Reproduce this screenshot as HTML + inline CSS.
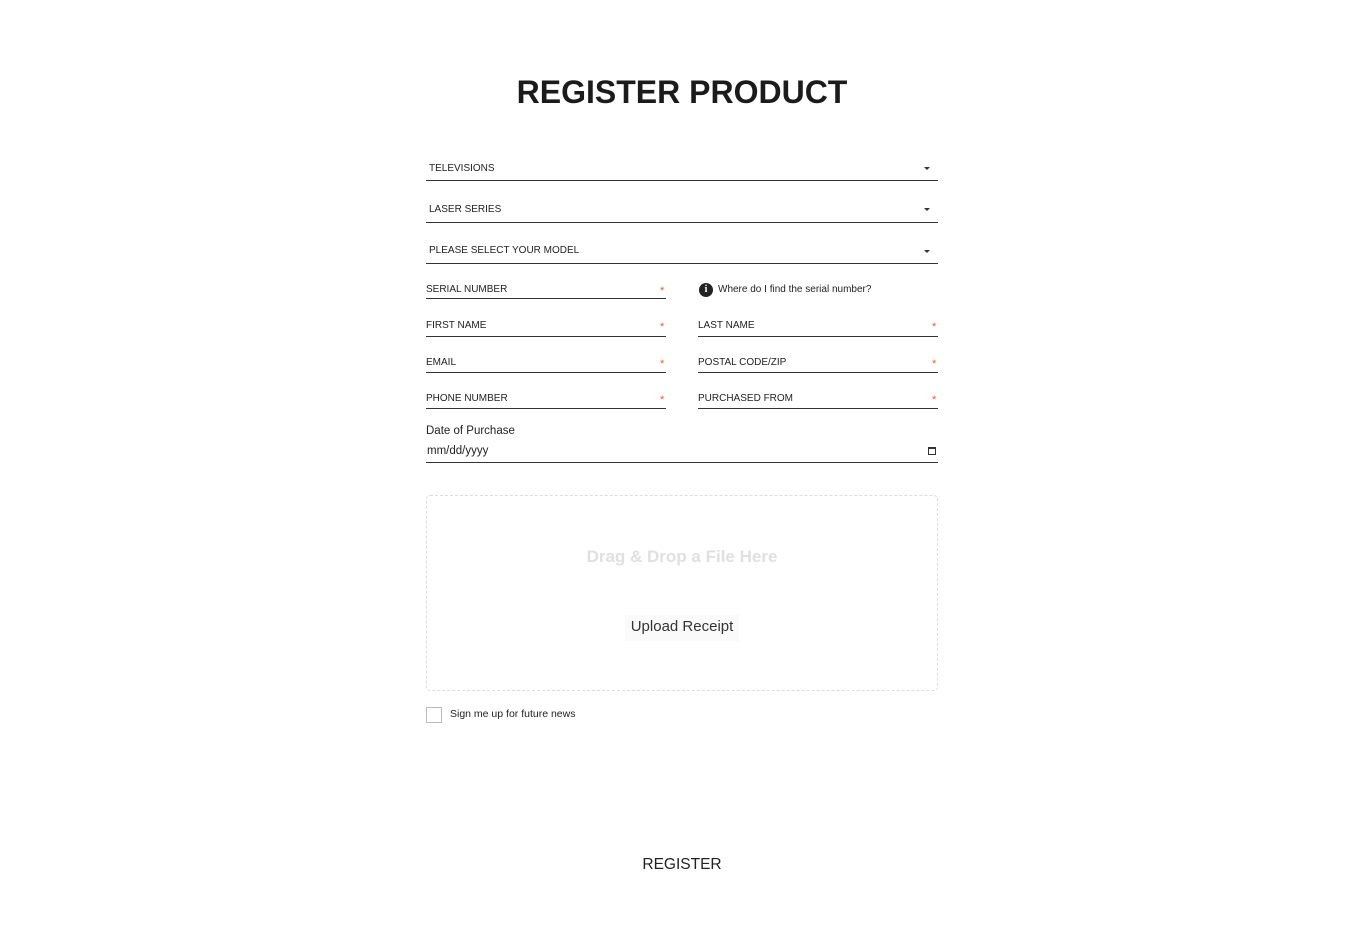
<!DOCTYPE html>
<html><head><meta charset="utf-8"><style>
*{margin:0;padding:0;box-sizing:border-box}
body{width:1364px;height:941px;background:#fff;position:relative;font-family:"Liberation Sans",sans-serif;color:#222;overflow:hidden}
.a{position:absolute}
.t{font-size:10px;color:#222;white-space:nowrap}
.l{position:absolute;height:1px;background:#333}
.s{position:absolute;font-size:11px;color:#f05a28}
.c{position:absolute;width:0;height:0;border-left:3px solid transparent;border-right:3px solid transparent;border-top:3px solid #333}
</style></head><body>
<div class="a" style="left:0;width:1364px;top:74px;text-align:center;font-size:32px;font-weight:bold;color:#1b1b1b">REGISTER PRODUCT</div>

<div class="a t" style="left:429px;top:163px">TELEVISIONS</div><div class="c" style="left:924px;top:167px"></div><div class="l" style="left:426px;top:180px;width:512px"></div>
<div class="a t" style="left:429px;top:204px">LASER SERIES</div><div class="c" style="left:924px;top:208px"></div><div class="l" style="left:426px;top:222px;width:512px"></div>
<div class="a t" style="left:429px;top:245px">PLEASE SELECT YOUR MODEL</div><div class="c" style="left:924px;top:250px"></div><div class="l" style="left:426px;top:263px;width:512px"></div>

<div class="a t" style="left:426px;top:284px">SERIAL NUMBER</div><div class="s" style="left:660px;top:285px">*</div><div class="l" style="left:426px;top:298px;width:240px"></div>
<div class="a" style="left:699px;top:283px;width:14px;height:14px;border-radius:50%;background:#222;color:#fff;font-size:10px;font-weight:bold;text-align:center;line-height:14px;font-family:'Liberation Serif',serif">i</div>
<div class="a t" style="left:718px;top:284px">Where do I find the serial number?</div>

<div class="a t" style="left:426px;top:320px">FIRST NAME</div><div class="s" style="left:660px;top:321px">*</div><div class="l" style="left:426px;top:336px;width:240px"></div>
<div class="a t" style="left:698px;top:320px">LAST NAME</div><div class="s" style="left:932px;top:321px">*</div><div class="l" style="left:698px;top:336px;width:240px"></div>
<div class="a t" style="left:426px;top:357px">EMAIL</div><div class="s" style="left:660px;top:358px">*</div><div class="l" style="left:426px;top:372px;width:240px"></div>
<div class="a t" style="left:698px;top:357px">POSTAL CODE/ZIP</div><div class="s" style="left:932px;top:358px">*</div><div class="l" style="left:698px;top:372px;width:240px"></div>
<div class="a t" style="left:426px;top:393px">PHONE NUMBER</div><div class="s" style="left:660px;top:394px">*</div><div class="l" style="left:426px;top:408px;width:240px"></div>
<div class="a t" style="left:698px;top:393px">PURCHASED FROM</div><div class="s" style="left:932px;top:394px">*</div><div class="l" style="left:698px;top:408px;width:240px"></div>

<div class="a" style="left:426px;top:425px;font-size:11.5px">Date of Purchase</div>
<div class="a" style="left:427px;top:445px;font-size:11.5px">mm/dd/yyyy</div>
<div class="a" style="left:928px;top:447px;width:8px;height:8px;border:1px solid #333;border-top-width:2px"></div>
<div class="l" style="left:426px;top:462px;width:512px"></div>

<div class="a" style="left:426px;top:495px;width:512px;height:196px;border:1px dashed #ddd;border-radius:4px"></div>
<div class="a" style="left:426px;width:512px;top:547px;text-align:center;font-size:17px;font-weight:bold;color:#e0e0e0">Drag &amp; Drop a File Here</div>
<div class="a" style="left:625px;top:615px;width:114px;height:26px;background:#fafafa"></div>
<div class="a" style="left:426px;width:512px;top:618px;text-align:center;font-size:15px;color:#333">Upload Receipt</div>

<div class="a" style="left:426px;top:707px;width:16px;height:16px;border:1px solid #bbb"></div>
<div class="a" style="left:450px;top:708px;font-size:10.5px">Sign me up for future news</div>

<div class="a" style="left:0;width:1364px;top:856px;text-align:center;font-size:15.5px;color:#222">REGISTER</div>
</body></html>
